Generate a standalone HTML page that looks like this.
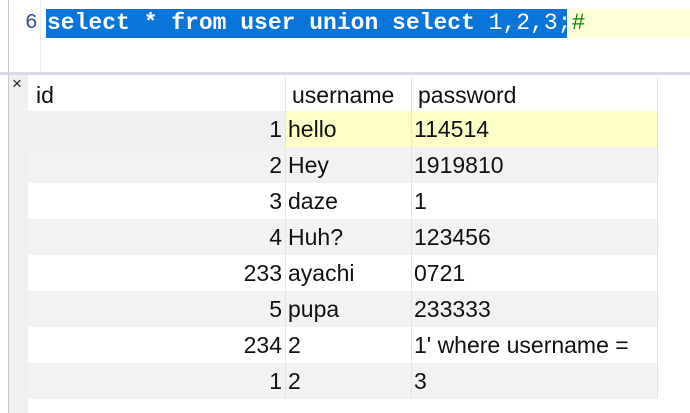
<html><head><style>
body{margin:0;width:690px;height:413px;overflow:hidden;background:#fff;position:relative;font-family:"Liberation Sans",Arial,sans-serif}
.a{position:absolute}
.c{position:absolute;font-size:23px;line-height:36px;color:#111;white-space:nowrap}
</style></head><body>
<div class="a" style="left:0;top:0;width:690px;height:72px;background:#fff"></div>
<div class="a" style="left:8px;top:0;width:1px;height:413px;background:#c8c8d0"></div>
<div class="a" style="left:40px;top:0;width:1px;height:72px;background:#eee"></div>
<div class="a" style="left:24px;top:-16px;font:21px 'Liberation Mono',monospace;color:#555">5</div>
<div class="a" style="left:567px;top:9px;width:123px;height:29px;background:#ffffd8"></div>
<div class="a" style="left:46px;top:9px;width:521px;height:29px;background:#0a74d8"></div>
<div class="a" style="left:25px;top:9px;font:21px/29px 'Liberation Mono',monospace;color:#3a4a9a">6</div>
<div class="a" style="left:47px;top:9px;font:bold 23px/29px 'Liberation Mono',monospace;color:#fff;white-space:pre">select * from user union select <span style="font-weight:normal">1,2,3;</span><span style="font-weight:normal;color:#0a8a0a">#</span></div>
<div class="a" style="left:0;top:72px;width:690px;height:3px;background:#d8d8e0"></div>
<div class="a" style="left:9px;top:75px;width:19px;height:338px;background:#f0f0f0"></div>
<div class="a" style="left:12px;top:74px;font-size:17px;color:#222">×</div>
<div class="a" style="left:28px;top:111px;width:257px;height:36px;background:#f0f0f0"></div>
<div class="a" style="left:285px;top:111px;width:372px;height:36px;background:#ffffc8"></div>
<div class="a" style="left:28px;top:147px;width:629px;height:36px;background:#f2f2f2"></div>
<div class="a" style="left:28px;top:219px;width:629px;height:36px;background:#f2f2f2"></div>
<div class="a" style="left:28px;top:291px;width:629px;height:36px;background:#f2f2f2"></div>
<div class="a" style="left:28px;top:363px;width:629px;height:36px;background:#f2f2f2"></div>
<div class="a" style="left:285px;top:77px;width:1px;height:322px;background:#e4e4e4"></div>
<div class="a" style="left:411px;top:77px;width:1px;height:322px;background:#e4e4e4"></div>
<div class="a" style="left:657px;top:77px;width:1px;height:322px;background:#e4e4e4"></div>
<div class="c" style="left:36px;top:77px">id</div>
<div class="c" style="left:292px;top:77px">username</div>
<div class="c" style="left:418px;top:77px">password</div>
<div class="c" style="right:408px;top:111px">1</div><div class="c" style="left:288px;top:111px">hello</div><div class="c" style="left:414px;top:111px">114514</div>
<div class="c" style="right:408px;top:147px">2</div><div class="c" style="left:288px;top:147px">Hey</div><div class="c" style="left:414px;top:147px">1919810</div>
<div class="c" style="right:408px;top:183px">3</div><div class="c" style="left:288px;top:183px">daze</div><div class="c" style="left:414px;top:183px">1</div>
<div class="c" style="right:408px;top:219px">4</div><div class="c" style="left:288px;top:219px">Huh?</div><div class="c" style="left:414px;top:219px">123456</div>
<div class="c" style="right:408px;top:255px">233</div><div class="c" style="left:288px;top:255px">ayachi</div><div class="c" style="left:414px;top:255px">0721</div>
<div class="c" style="right:408px;top:291px">5</div><div class="c" style="left:288px;top:291px">pupa</div><div class="c" style="left:414px;top:291px">233333</div>
<div class="c" style="right:408px;top:327px">234</div><div class="c" style="left:288px;top:327px">2</div><div class="c" style="left:414px;top:327px">1' where username =</div>
<div class="c" style="right:408px;top:363px">1</div><div class="c" style="left:288px;top:363px">2</div><div class="c" style="left:414px;top:363px">3</div>
</body></html>
